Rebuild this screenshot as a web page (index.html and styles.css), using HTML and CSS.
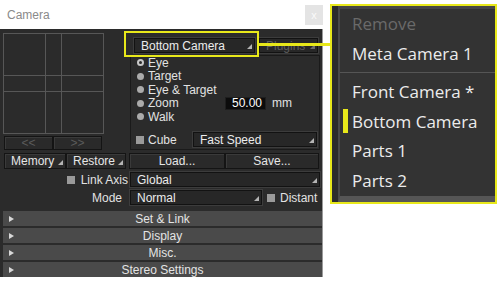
FILE: index.html
```html
<!DOCTYPE html>
<html lang="en">
<head>
  <meta charset="UTF-8" />
  <title>Camera</title>
  <link rel="stylesheet" href="styles.css">
</head>
<body>

<div class="window">
  <div class="titlebar">
    <span class="title">Camera</span>
    <span class="close">x</span>
  </div>

  <div class="panel">
    <div class="top">
      <div class="left">
        <div class="viewer">
          <div class="cell"></div><div class="cell"></div><div class="cell"></div>
          <div class="cell"></div><div class="cell"></div><div class="cell"></div>
          <div class="cell"></div><div class="cell"></div><div class="cell"></div>
        </div>
        <div class="arrows">
          <div class="btn dim">&lt;&lt;</div>
          <div class="btn dim">&gt;&gt;</div>
        </div>
      </div>

      <div class="right">
        <div class="cam-row">
          <div class="select cam"><span>Bottom Camera</span><i class="grip"></i></div>
          <div class="select plugins"><span>Plugins</span><i class="grip"></i></div>
        </div>
        <div class="frame">
          <div class="radio"><i class="dot on"></i>Eye</div>
          <div class="radio"><i class="dot"></i>Target</div>
          <div class="radio"><i class="dot"></i>Eye &amp; Target</div>
          <div class="radio">
            <span class="zoom-label"><i class="dot"></i>Zoom</span>
            <span class="num">50.00</span>
            <span class="unit">mm</span>
          </div>
          <div class="radio"><i class="dot"></i>Walk</div>
          <div class="cube-row">
            <i class="check"></i><span class="cube-label">Cube</span>
            <div class="select speed"><span>Fast Speed</span><i class="grip"></i></div>
          </div>
        </div>
      </div>
    </div>

    <div class="btn-row">
      <div class="btn drop memory"><span>Memory</span><i class="grip"></i></div>
      <div class="btn drop restore"><span>Restore</span><i class="grip"></i></div>
      <div class="btn load">Load...</div>
      <div class="btn save">Save...</div>
    </div>

    <div class="form-row">
      <div class="label"><i class="check"></i><span>Link Axis</span></div>
      <div class="select axis"><span>Global</span><i class="grip"></i></div>
    </div>

    <div class="form-row">
      <div class="label mode">Mode</div>
      <div class="select normal"><span>Normal</span><i class="grip"></i></div>
      <i class="check distant-box"></i><span class="distant">Distant</span>
    </div>

    <div class="bars">
      <div class="bar"><i class="arrow"></i><span>Set &amp; Link</span></div>
      <div class="bar"><i class="arrow"></i><span>Display</span></div>
      <div class="bar"><i class="arrow"></i><span>Misc.</span></div>
      <div class="bar"><i class="arrow"></i><span>Stereo Settings</span></div>
    </div>
  </div>
</div>

<div class="highlight"></div>
<div class="connector"></div>

<div class="popup">
  <div class="menu">
    <div class="item disabled">Remove</div>
    <div class="item">Meta Camera 1</div>
    <div class="sep"></div>
    <div class="item">Front Camera *</div>
    <div class="item current"><i class="marker"></i>Bottom Camera</div>
    <div class="item">Parts 1</div>
    <div class="item">Parts 2</div>
  </div>
</div>

</body>
</html>
```

FILE: styles.css
```css
* {
  box-sizing: border-box;
}
body {
  margin: 0;
  width: 500px;
  height: 300px;
  overflow: hidden;
  position: relative;
  background: #fff;
  font-family: "Liberation Sans", Arial, sans-serif;
  font-size: 12px;
  color: #e2e2e2;
}
i {
  display: block;
  font-style: normal;
}
.window {
  width: 323px;
}
.titlebar {
  height: 29px;
  display: flex;
  justify-content: space-between;
  align-items: flex-start;
  padding-left: 7px;
  background: #fff;
}
.title {
  margin-top: 8px;
  color: #8a8a8a;
  font-size: 12px;
}
.close {
  width: 18px;
  height: 20px;
  margin-top: 5px;
  background: #e4e4e4;
  color: #fafafa;
  font-size: 11px;
  display: flex;
  align-items: center;
  justify-content: center;
}
.panel {
  height: 248px;
  background: #2b2b2b;
  border-right: 1px solid #9a9a9a;
  padding: 4px 0 0 3px;
}
.top {
  display: flex;
  gap: 26px;
}
.viewer {
  width: 101px;
  display: grid;
  grid-template-columns: 41px 15px 41px;
  grid-template-rows: 41px 15px 41px;
  gap: 1px;
  padding: 1px;
  background: #575757;
}
.cell {
  background: #2b2b2b;
}
.arrows {
  display: flex;
  width: 98px;
  height: 14px;
  margin: 2px 0 0 1px;
}
.arrows .btn {
  flex: 1;
}
.btn {
  height: 100%;
  background: #2a2a2a;
  border: 1px solid #141414;
  box-shadow: inset 1px 1px 0 #3a3a3a;
  display: flex;
  align-items: center;
  justify-content: center;
  color: #e6e6e6;
}
.btn.dim {
  color: #5a5a5a;
}
.grip {
  width: 0;
  height: 0;
  border-left: 5px solid transparent;
  border-bottom: 5px solid #b4b4b4;
  align-self: flex-end;
  margin: 0 2px 3px auto;
}
.select {
  height: 15px;
  display: flex;
  align-items: center;
  padding-left: 6px;
  background: #272727;
  border: 1px solid #121212;
  box-shadow: 0 0 0 1px #3c3c3c;
  color: #ececec;
}
.right {
  width: 190px;
}
.cam-row {
  display: flex;
  margin-top: 5px;
  height: 15px;
}
.cam {
  width: 121px;
  margin-left: 4px;
}
.plugins {
  width: 59px;
  margin-left: 4px;
  color: #5e5e5e;
}
.plugins .grip {
  border-bottom-color: #6a6a6a;
}
.frame {
  height: 95px;
  margin-top: 2px;
  border: 1px solid #1a1a1a;
  padding-left: 6px;
}
.radio {
  height: 13.5px;
  display: flex;
  align-items: center;
}
.dot {
  width: 7px;
  height: 7px;
  margin-right: 4px;
  border-radius: 50%;
  background: #ababab;
}
.dot.on {
  background: #2b2b2b;
  border: 2px solid #c8c8c8;
}
.zoom-label {
  width: 88px;
  display: flex;
  align-items: center;
}
.num {
  width: 41px;
  height: 13px;
  background: #0c0c0c;
  border: 1px solid #1e1e1e;
  text-align: right;
  padding-right: 3px;
  line-height: 11px;
  color: #fff;
}
.unit {
  margin-left: 6px;
}
.cube-row {
  display: flex;
  align-items: center;
  margin-top: 8.5px;
}
.check {
  width: 8px;
  height: 8px;
  background: #9a9a9a;
}
.cube-row .check {
  margin-left: -1px;
}
.cube-label {
  margin-left: 4px;
}
.speed {
  width: 124px;
  margin: 0 2px 0 auto;
}
.btn-row {
  display: flex;
  height: 16px;
  margin-top: 3px;
}
.drop {
  justify-content: flex-start;
  padding-left: 6px;
}
.memory {
  width: 62px;
  margin-left: 1px;
}
.restore {
  width: 60px;
}
.load {
  width: 96px;
  margin-left: 3px;
}
.save {
  width: 94px;
}
.form-row {
  display: flex;
  align-items: center;
  height: 15px;
  margin-top: 3px;
}
.label {
  width: 127px;
  display: flex;
  align-items: center;
  justify-content: flex-end;
  padding-right: 2px;
  gap: 6px;
}
.label.mode {
  padding-right: 8px;
}
.axis {
  width: 190px;
}
.normal {
  width: 132px;
}
.distant-box {
  margin-left: 5px;
}
.distant {
  margin-left: 5px;
}
.bars {
  display: flex;
  flex-direction: column;
  gap: 2px;
  margin-top: 6px;
}
.bar {
  height: 15px;
  display: grid;
  grid-template-columns: 20px 1fr 20px;
  align-items: center;
  background: #4a4a4a;
  color: #e4e4e4;
}
.bar span {
  text-align: center;
}
.arrow {
  width: 0;
  height: 0;
  margin-left: 6px;
  border-top: 3px solid transparent;
  border-bottom: 3px solid transparent;
  border-left: 5px solid #d8d8d8;
}
.highlight {
  position: absolute;
  left: 124px;
  top: 31px;
  width: 135px;
  height: 26px;
  border: 2px solid #e8e81a;
}
.connector {
  position: absolute;
  left: 259px;
  top: 43px;
  width: 71px;
  height: 3px;
  background: #e8e81a;
}
.popup {
  position: absolute;
  left: 330px;
  top: 4px;
  width: 167px;
  height: 200px;
  border: 2px solid #e8e81a;
  background: #2c2c2c;
  padding-left: 6px;
}
.menu {
  height: 100%;
  background: #333;
  border-top: 3px solid #474747;
  border-left: 2px solid #4a4a4a;
  border-bottom: 6px solid #555;
  font-family: "Open Sans", "Noto Sans", sans-serif;
  font-size: 17px;
  color: #ececec;
}
.item {
  height: 29.5px;
  display: flex;
  align-items: center;
  padding-left: 12px;
}
.item.disabled {
  color: #6a6a6a;
}
.item.current {
  padding-left: 3px;
}
.marker {
  width: 5px;
  height: 24px;
  margin-right: 4px;
  background: #e8e81a;
}
.sep {
  height: 1px;
  margin: 4px 0;
  background: #555;
}
```
